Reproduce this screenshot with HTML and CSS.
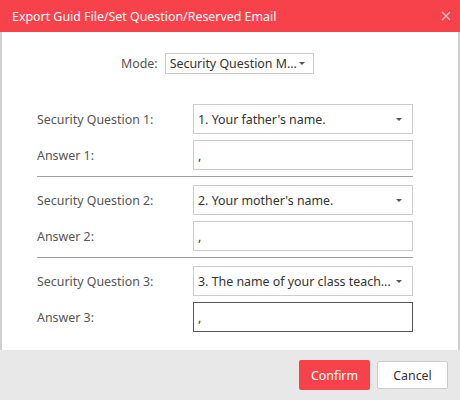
FILE: index.html
```html
<!DOCTYPE html>
<html lang="en">
<head>
  <meta charset="UTF-8" />
  <title>Export Guid File</title>
  <link rel="stylesheet" href="styles.css">
</head>
<body>

  <div class="dialog">
    <div class="dialog-header">
      <span class="dialog-title">Export Guid File/Set Question/Reserved Email</span>
      <svg class="close-icon" width="10" height="10" viewBox="0 0 10 10">
        <path d="M1 1 L9 9 M9 1 L1 9" stroke="#f6c4c6" stroke-width="1.2" fill="none" />
      </svg>
    </div>

    <div class="dialog-body">
      <div class="mode-row">
        <span class="mode-label">Mode:</span>
        <div class="select mode-select">
          <span class="select-text">Security Question M...</span>
          <span class="caret"></span>
        </div>
      </div>

      <div class="section">
        <div class="form-row">
          <label>Security Question 1:</label>
          <div class="select">
            <span class="select-text">1. Your father's name.</span>
            <span class="caret"></span>
          </div>
        </div>
        <div class="form-row">
          <label>Answer 1:</label>
          <input type="text" class="answer" value="," />
        </div>
      </div>

      <div class="section">
        <div class="form-row">
          <label>Security Question 2:</label>
          <div class="select">
            <span class="select-text">2. Your mother's name.</span>
            <span class="caret"></span>
          </div>
        </div>
        <div class="form-row">
          <label>Answer 2:</label>
          <input type="text" class="answer" value="," />
        </div>
      </div>

      <div class="section last">
        <div class="form-row">
          <label>Security Question 3:</label>
          <div class="select">
            <span class="select-text">3. The name of your class teach...</span>
            <span class="caret"></span>
          </div>
        </div>
        <div class="form-row">
          <label>Answer 3:</label>
          <input type="text" class="answer focused" value="," />
        </div>
      </div>
    </div>

    <div class="dialog-footer">
      <button class="btn btn-primary">Confirm</button>
      <button class="btn btn-default">Cancel</button>
    </div>
  </div>

</body>
</html>
```

FILE: styles.css
```css
* {
  box-sizing: border-box;
}

body {
  margin: 0;
  font-family: 'Noto Sans', 'Open Sans', sans-serif;
  font-size: 12.4px;
  color: #555;
}

.dialog {
  width: 460px;
  height: 400px;
  display: flex;
  flex-direction: column;
}

.dialog-header {
  flex-shrink: 0;
  height: 32px;
  background: #f8424b;
  padding: 0 9px 0 12px;
  display: flex;
  align-items: center;
  justify-content: space-between;
}

.dialog-title {
  color: #fff;
  font-size: 12.4px;
}

.dialog-body {
  flex: 1;
  min-height: 0;
  overflow: hidden;
  background: #fff;
  border-left: 2px solid #d0d0d0;
  border-right: 2px solid #d0d0d0;
  padding-top: 21px;
}

.mode-row {
  display: flex;
  align-items: center;
  padding-left: 119px;
  gap: 7px;
  margin-bottom: 30px;
}

.select {
  width: 220px;
  height: 30px;
  border: 1px solid #ccc;
  display: flex;
  align-items: center;
  justify-content: space-between;
  padding: 0 10px 0 4px;
  color: #333;
}

.mode-select {
  width: 149px;
  height: 21px;
  padding-right: 8px;
}

.select-text {
  white-space: nowrap;
}

.caret {
  width: 0;
  height: 0;
  border-left: 3.5px solid transparent;
  border-right: 3.5px solid transparent;
  border-top: 3px solid #555;
}

.section {
  margin: 0 45px 8px 35px;
  padding-bottom: 6px;
  border-bottom: 1px solid #a0a0a0;
}

.section.last {
  border-bottom: none;
}

.form-row {
  display: flex;
  align-items: center;
}

.form-row + .form-row {
  margin-top: 6px;
}

.form-row label {
  width: 156px;
}

.answer {
  width: 220px;
  height: 30px;
  border: 1px solid #ccc;
  padding: 0 4px;
  font-family: inherit;
  font-size: 12.4px;
  color: #333;
  outline: none;
}

.answer.focused {
  border-color: #555;
}

.dialog-footer {
  flex-shrink: 0;
  height: 50px;
  background: #e8e8e8;
  display: flex;
  justify-content: flex-end;
  align-items: center;
  gap: 7px;
  padding-right: 12px;
}

.btn {
  width: 71px;
  height: 30px;
  font-family: inherit;
  font-size: 12.4px;
  border-radius: 2px;
  cursor: pointer;
}

.btn-primary {
  background: #f8424b;
  border: none;
  color: #fff;
}

.btn-default {
  background: #fff;
  border: 1px solid #ccc;
  color: #333;
  height: 28px;
}
```
